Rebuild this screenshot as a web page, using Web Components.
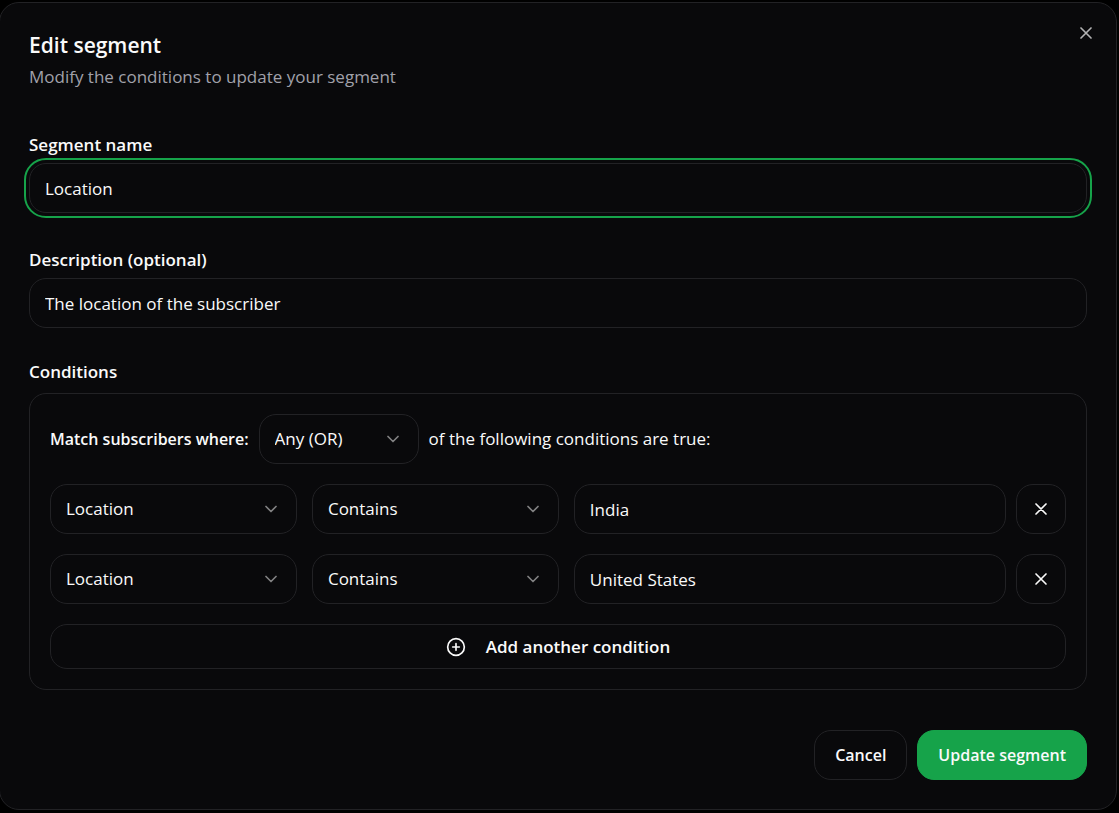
<!DOCTYPE html>
<html lang="en">
<head>
    <meta charset="utf-8">
    <meta name="viewport" content="width=device-width, initial-scale=1">
    <title>Edit segment</title>
    <style>
        :root {
            --bg: #09090b;
            --text: #fafafa;
            --muted: #a1a1aa;
            --border: #222225;
            --green: #16a34a;
            --radius: 17px;
        }

        body {
            margin: 0;
            padding: 2px 2px 2px 0;
            background: #000;
            color: var(--text);
            font-family: "Open Sans", "Noto Sans", sans-serif;
            font-size: 17px;
            line-height: 22px;
        }
    </style>
</head>
<body>
    <seg-dialog>
        <span slot="title">Edit segment</span>
        <span slot="description">Modify the conditions to update your segment</span>

        <seg-field label="Segment name" value="Location" active></seg-field>
        <seg-field label="Description (optional)" value="The location of the subscriber"></seg-field>
        <seg-conditions>
            <seg-condition field="Location" operator="Contains" value="India"></seg-condition>
            <seg-condition field="Location" operator="Contains" value="United States"></seg-condition>
        </seg-conditions>

        <seg-button slot="actions">Cancel</seg-button>
        <seg-button slot="actions" primary>Update segment</seg-button>
    </seg-dialog>

    <script>
        const icons = {
            x: '<path d="M18 6 6 18M6 6l12 12"/>',
            chevron: '<path d="m6 9 6 6 6-6"/>',
            plus: '<circle cx="12" cy="12" r="10"/><path d="M8 12h8M12 8v8"/>'
        };

        // inline svg for one of the icons above
        const icon = name => `
            <svg viewBox="0 0 24 24" width="20" height="20" fill="none" stroke="currentColor"
                stroke-width="2" stroke-linecap="round" stroke-linejoin="round" aria-hidden="true">${icons[name]}</svg>
        `;

        // shared by every element that draws a form control
        const controlStyles = `
            * { box-sizing: border-box; }

            svg { display: block; flex: none; }

            input, select, button {
                font: inherit;
                color: inherit;
                margin: 0;
                background: var(--bg);
                border: 1px solid var(--border);
                border-radius: var(--radius);
                outline: none;
            }

            input, select {
                display: block;
                width: 100%;
                height: 50px;
                padding: 0 15px;
            }

            select {
                appearance: none;
                padding-right: 40px;
            }

            button {
                cursor: pointer;
            }
        `;

        class SegDialog extends HTMLElement {
            constructor() {
                super();

                this.attachShadow({ mode: 'open' });
                this.shadowRoot.innerHTML = `
                    <style>
                        :host {
                            display: block;
                            position: relative;
                            margin-left: -1px;
                            padding: 29px;
                            background: var(--bg);
                            border: 1px solid var(--border);
                            border-radius: 20px;
                        }

                        header {
                            display: flex;
                            flex-direction: column;
                            gap: 6px;
                            margin-bottom: 44px;
                            line-height: 26px;
                        }

                        h2 {
                            margin: 0;
                            font-size: 21px;
                            font-weight: 600;
                        }

                        p {
                            margin: 0;
                            color: var(--muted);
                        }

                        #main {
                            display: flex;
                            flex-direction: column;
                            gap: 36px;
                        }

                        footer {
                            display: flex;
                            justify-content: flex-end;
                            gap: 10px;
                            margin-top: 40px;
                        }

                        #close {
                            position: absolute;
                            top: 20px;
                            right: 20px;
                            padding: 0;
                            border: 0;
                            background: none;
                            color: var(--text);
                            opacity: 0.7;
                            cursor: pointer;
                        }

                        svg { display: block; }
                    </style>
                    <header>
                        <h2><slot name="title"></slot></h2>
                        <p><slot name="description"></slot></p>
                    </header>
                    <section id="main">
                        <slot></slot>
                    </section>
                    <footer>
                        <slot name="actions"></slot>
                    </footer>
                    <button id="close" type="button" aria-label="Close">${icon('x')}</button>
                `;

                this.setAttribute('role', 'dialog');
                this.shadowRoot.querySelector('#close').addEventListener('click', () => {
                    this.dispatchEvent(new Event('close'));
                });
            }
        }

        class SegField extends HTMLElement {
            constructor() {
                super();

                this.attachShadow({ mode: 'open' });
                this.shadowRoot.innerHTML = `
                    <style>
                        ${controlStyles}

                        :host {
                            display: flex;
                            flex-direction: column;
                            gap: 7px;
                        }

                        label { font-weight: 600; }

                        input:focus,
                        :host([active]) input {
                            outline: 2px solid var(--green);
                            outline-offset: 3px;
                        }
                    </style>
                    <label for="input"></label>
                    <input id="input" type="text">
                `;

                this.shadowRoot.querySelector('label').textContent = this.getAttribute('label');
                this.shadowRoot.querySelector('input').value = this.getAttribute('value') || '';
            }
        }

        // options is a comma separated list, the first one is selected
        class SegSelect extends HTMLElement {
            constructor() {
                super();

                this.attachShadow({ mode: 'open' });
                this.shadowRoot.innerHTML = `
                    <style>
                        ${controlStyles}

                        :host {
                            display: grid;
                            align-items: center;
                        }

                        select, svg { grid-area: 1 / 1; }

                        svg {
                            justify-self: end;
                            margin-right: 16px;
                            opacity: 0.5;
                            pointer-events: none;
                        }
                    </style>
                    <select></select>
                    ${icon('chevron')}
                `;
            }

            connectedCallback() {
                const select = this.shadowRoot.querySelector('select');
                select.setAttribute('aria-label', this.getAttribute('label'));
                select.replaceChildren(...this.getAttribute('options').split(',').map(text => new Option(text)));
            }
        }

        class SegCondition extends HTMLElement {
            constructor() {
                super();

                this.attachShadow({ mode: 'open' });
                this.shadowRoot.innerHTML = `
                    <style>
                        ${controlStyles}

                        :host {
                            display: flex;
                            gap: 10px;
                        }

                        #parts {
                            flex: 1;
                            display: grid;
                            grid-template-columns: 4fr 4fr 7fr;
                            gap: 15px;
                        }

                        button {
                            display: flex;
                            align-items: center;
                            justify-content: center;
                            width: 50px;
                            height: 50px;
                            padding: 0;
                        }
                    </style>
                    <div id="parts">
                        <seg-select label="Field" options="${this.getAttribute('field')}"></seg-select>
                        <seg-select label="Operator" options="${this.getAttribute('operator')}"></seg-select>
                        <input type="text" aria-label="Value" value="${this.getAttribute('value')}">
                    </div>
                    <button type="button" aria-label="Remove condition">${icon('x')}</button>
                `;

                this.shadowRoot.querySelector('button').addEventListener('click', () => this.remove());
            }
        }

        class SegConditions extends HTMLElement {
            constructor() {
                super();

                this.attachShadow({ mode: 'open' });
                this.shadowRoot.innerHTML = `
                    <style>
                        ${controlStyles}

                        :host {
                            display: flex;
                            flex-direction: column;
                            gap: 13px;
                        }

                        h3 {
                            margin: 0;
                            font-size: 17px;
                            font-weight: 600;
                            line-height: 16px;
                        }

                        #panel {
                            display: flex;
                            flex-direction: column;
                            gap: 20px;
                            padding: 20px;
                            border: 1px solid var(--border);
                            border-radius: var(--radius);
                        }

                        #match {
                            display: flex;
                            align-items: center;
                            gap: 10px;
                        }

                        #match strong {
                            font-size: 16px;
                            font-weight: 600;
                        }

                        #match seg-select { width: 160px; }

                        #add {
                            display: flex;
                            align-items: center;
                            justify-content: center;
                            gap: 20px;
                            height: 45px;
                            font-weight: 600;
                        }
                    </style>
                    <h3>Conditions</h3>
                    <div id="panel">
                        <div id="match">
                            <strong>Match subscribers where:</strong>
                            <seg-select label="Match" options="Any (OR),All (AND)"></seg-select>
                            <span>of the following conditions are true:</span>
                        </div>
                        <slot></slot>
                        <button id="add" type="button">${icon('plus')}Add another condition</button>
                    </div>
                `;

                this.shadowRoot.querySelector('#add').addEventListener('click', this._add.bind(this));
            }

            _add() {
                const last = this.querySelector('seg-condition:last-of-type');
                if (last) {
                    this.append(last.cloneNode());
                }
            }
        }

        class SegButton extends HTMLElement {
            constructor() {
                super();

                this.attachShadow({ mode: 'open' });
                this.shadowRoot.innerHTML = `
                    <style>
                        ${controlStyles}

                        :host { display: block; }

                        button {
                            height: 50px;
                            padding: 0 20px;
                            font-size: 16px;
                            font-weight: 600;
                        }

                        :host([primary]) button {
                            background: var(--green);
                            border-color: var(--green);
                        }
                    </style>
                    <button type="button"><slot></slot></button>
                `;
            }
        }

        customElements.define('seg-dialog', SegDialog);
        customElements.define('seg-field', SegField);
        customElements.define('seg-select', SegSelect);
        customElements.define('seg-condition', SegCondition);
        customElements.define('seg-conditions', SegConditions);
        customElements.define('seg-button', SegButton);
    </script>
</body>
</html>
